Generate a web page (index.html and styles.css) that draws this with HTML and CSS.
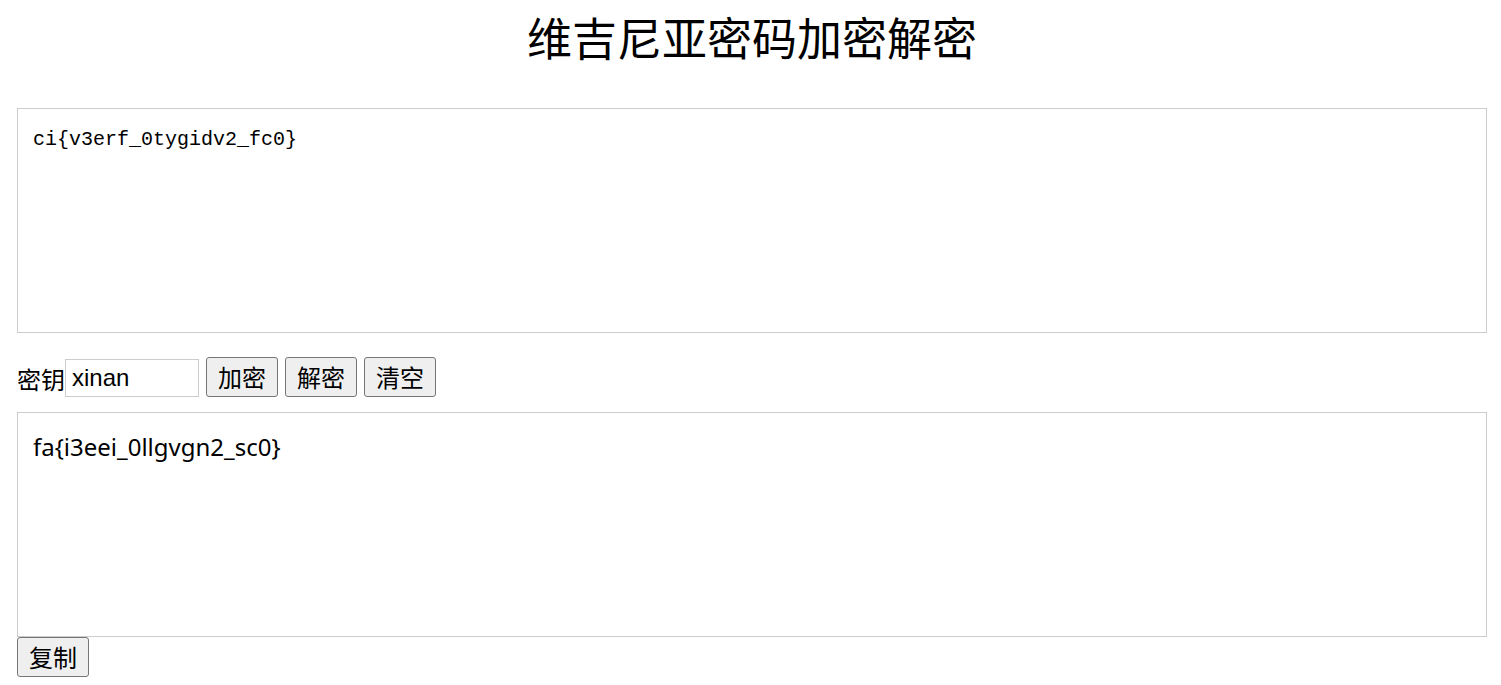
FILE: index.html
```html
<!DOCTYPE html>
<html lang="zh-CN">
<head>
  <meta charset="UTF-8">
  <meta name="viewport" content="width=device-width, initial-scale=1.0">
  <title>维吉尼亚密码加密解密</title>
  <link rel="stylesheet" href="styles.css">
</head>
<body>
  <div class="page">
    <h1>维吉尼亚密码加密解密</h1>

    <textarea id="input" class="source">ci{v3erf_0tygidv2_fc0}</textarea>

    <div class="controls">
      <label for="key">密钥</label>
      <input type="text" id="key" value="xinan">
      <button onclick="encrypt()">加密</button>
      <button onclick="decrypt()">解密</button>
      <button onclick="clearAll()">清空</button>
    </div>

    <textarea id="output" class="result">fa{i3eei_0llgvgn2_sc0}</textarea>
    <button onclick="copyResult()">复制</button>
  </div>

  <script>
    const input = document.getElementById("input");
    const output = document.getElementById("output");
    const keyInput = document.getElementById("key");

    // shift letters only, keep everything else as it is
    function vigenere(text, key, dir) {
      key = key.toLowerCase().replace(/[^a-z]/g, "");
      if (!key) return text;
      let k = 0;
      return text.replace(/[a-z]/gi, ch => {
        const base = ch <= "Z" ? 65 : 97;
        const shift = (key.charCodeAt(k++ % key.length) - 97) * dir;
        return String.fromCharCode((ch.charCodeAt(0) - base + shift + 26) % 26 + base);
      });
    }

    function encrypt() {
      output.value = vigenere(input.value, keyInput.value, 1);
    }

    function decrypt() {
      output.value = vigenere(input.value, keyInput.value, -1);
    }

    function clearAll() {
      input.value = "";
      output.value = "";
    }

    function copyResult() {
      output.select();
      document.execCommand("copy");
    }
  </script>
</body>
</html>
```

FILE: styles.css
```css
body {
  margin: 0;
  font-family: "Noto Sans", "Noto Sans CJK SC", sans-serif;
  font-size: 24px;
  color: #000;
  background: #fff;
}

.page {
  padding: 0 14px 0 17px;
}

h1 {
  margin: 0 0 31px;
  font-size: 45px;
  font-weight: normal;
  line-height: 77px;
  text-align: center;
}

textarea {
  display: block;
  box-sizing: border-box;
  width: 100%;
  height: 225px;
  margin: 0;
  padding: 15px;
  border: 1px solid #ccc;
  resize: none;
  outline: none;
  color: #000;
}

.source {
  font-family: "Liberation Mono", "Noto Sans CJK SC", monospace;
  font-size: 20px;
  line-height: 31px;
}

.result {
  font-family: "Noto Sans", "Noto Sans CJK SC", sans-serif;
  font-size: 24px;
  line-height: 38px;
}

.controls {
  display: flex;
  align-items: flex-end;
  margin: 24px 0 15px;
}

label {
  line-height: 34px;
}

input {
  box-sizing: border-box;
  width: 134px;
  height: 38px;
  padding: 4px 6px;
  margin: 0;
  border: 1px solid #ccc;
  font-family: "Liberation Sans", Arial, sans-serif;
  font-size: 24px;
  outline: none;
}

button {
  box-sizing: border-box;
  height: 40px;
  padding: 3px 11px;
  margin: 0;
  border: 1px solid #767676;
  border-radius: 3px;
  background: #efefef;
  font-family: "Noto Sans CJK SC", sans-serif;
  font-size: 24px;
  line-height: 32px;
  color: #000;
  cursor: pointer;
}

.controls button {
  margin-left: 7px;
}
```
